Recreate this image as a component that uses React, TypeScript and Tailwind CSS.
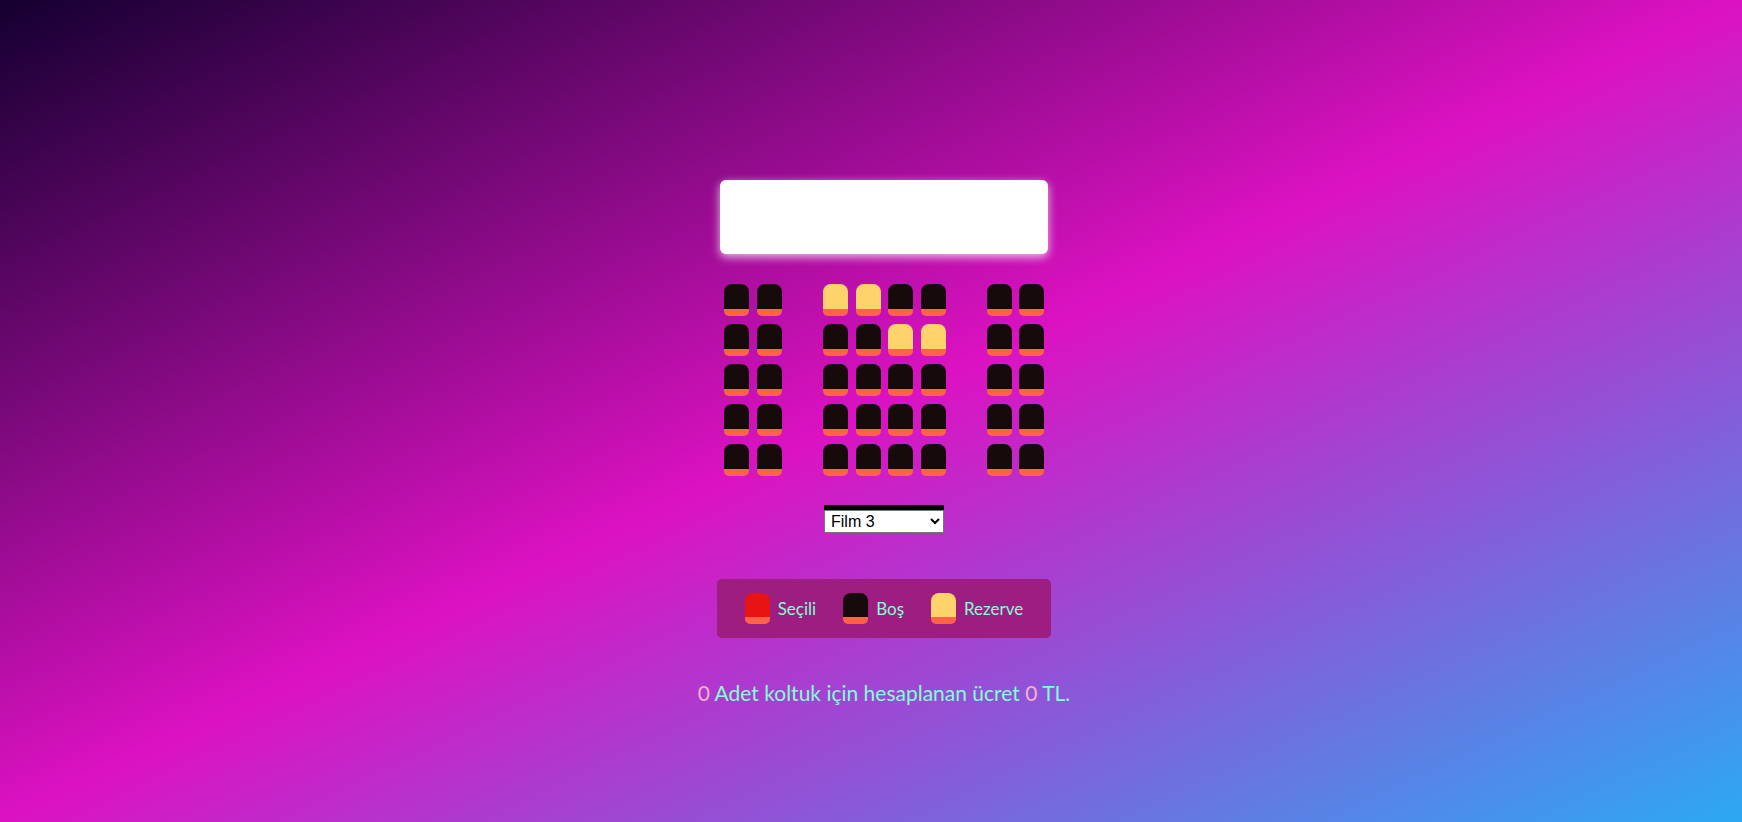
import React, { useState } from 'react';

// seat map: 0 = empty, 1 = reserved
const ROWS: number[][] = [
  [0, 0, 1, 1, 0, 0, 0, 0],
  [0, 0, 0, 0, 1, 1, 0, 0],
  [0, 0, 0, 0, 0, 0, 0, 0],
  [0, 0, 0, 0, 0, 0, 0, 0],
  [0, 0, 0, 0, 0, 0, 0, 0],
];

const Seat = ({ kind }: { kind: 'empty' | 'reserved' | 'selected' }) => {
  const bg =
    kind === 'reserved' ? 'bg-[#ffd36b]' : kind === 'selected' ? 'bg-[#e81313]' : 'bg-[#170a0b]';
  return (
    <div
      className={`w-[25px] h-[32px] rounded-t-[8px] rounded-b-[5px] border-b-[7px] border-b-[#ff6347] ${bg}`}
    />
  );
};

export default function App() {
  const [movie, setMovie] = useState('3');

  return (
    <div className="min-h-screen w-full bg-[linear-gradient(to_bottom_right,#140030,#dc12c2,#2ca9f2)] font-['Lato','Open_Sans',sans-serif]">
      <div className="flex flex-col items-center pt-[180px] pl-[26px] pb-10">
        {/* screen */}
        <div className="w-[328px] h-[74px] bg-white rounded-[6px] shadow-[0_3px_10px_rgba(255,255,255,0.75)]" />

        {/* seats */}
        <div className="mt-[30px] flex flex-col gap-[8px]">
          {ROWS.map((row, r) => (
            <div key={r} className="flex gap-[41px]">
              <div className="flex gap-[8px]">
                {row.slice(0, 2).map((s, i) => (
                  <Seat key={i} kind={s ? 'reserved' : 'empty'} />
                ))}
              </div>
              <div className="flex gap-[7.5px]">
                {row.slice(2, 6).map((s, i) => (
                  <Seat key={i} kind={s ? 'reserved' : 'empty'} />
                ))}
              </div>
              <div className="flex gap-[7px]">
                {row.slice(6).map((s, i) => (
                  <Seat key={i} kind={s ? 'reserved' : 'empty'} />
                ))}
              </div>
            </div>
          ))}
        </div>

        {/* movie picker */}
        <div className="mt-[29px] flex flex-col">
          <div className="w-[120px] h-[5px] bg-black" />
          <select
            value={movie}
            onChange={(e) => setMovie(e.target.value)}
            className="w-[120px] h-[23px] bg-white border border-[#767676] text-[16px] text-black font-['Liberation_Sans',Arial,sans-serif] pl-[2px]"
          >
            <option value="1">Film 1</option>
            <option value="2">Film 2</option>
            <option value="3">Film 3</option>
          </select>
        </div>

        {/* legend */}
        <div className="mt-[46px] flex items-center gap-[27px] px-[28px] py-[14px] rounded-[5px] bg-[#9d1d80]">
          <div className="flex items-center gap-[8px]">
            <div className="w-[25px] h-[31px] rounded-t-[8px] rounded-b-[5px] border-b-[7px] border-b-[#ff6347] bg-[#e81313]" />
            <span className="text-[17px] text-[#7fffd4]">Seçili</span>
          </div>
          <div className="flex items-center gap-[8px]">
            <div className="w-[25px] h-[31px] rounded-t-[8px] rounded-b-[5px] border-b-[7px] border-b-[#ff6347] bg-[#170a0b]" />
            <span className="text-[17px] text-[#7fffd4]">Boş</span>
          </div>
          <div className="flex items-center gap-[8px]">
            <div className="w-[25px] h-[31px] rounded-t-[8px] rounded-b-[5px] border-b-[7px] border-b-[#ff6347] bg-[#ffd36b]" />
            <span className="text-[17px] text-[#7fffd4]">Rezerve</span>
          </div>
        </div>

        {/* total */}
        <p className="mt-[42px] text-[21px] leading-[25px] text-[#7fffd4]">
          <span className="text-[#f5b2cb]">0</span> Adet koltuk için hesaplanan ücret{' '}
          <span className="text-[#f5b2cb]">0</span> TL.
        </p>
      </div>
    </div>
  );
}
